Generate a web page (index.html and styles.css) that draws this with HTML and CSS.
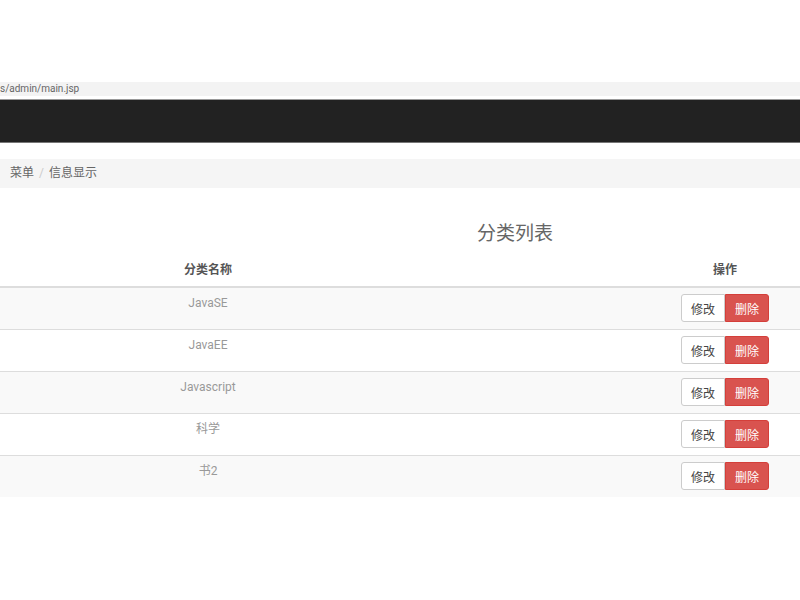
FILE: index.html
```html
<!DOCTYPE html>
<html lang="zh-CN">
<head>
    <meta charset="UTF-8">
    <title>分类列表</title>
    <link rel="stylesheet" href="styles.css">
</head>
<body>
    <div class="urlbar">s/admin/main.jsp</div>

    <!-- Navbar -->
    <div class="navbar"></div>

    <!-- Breadcrumb -->
    <div class="breadcrumb">
        <span>菜单</span>
        <span class="divider">/</span>
        <span>信息显示</span>
    </div>

    <h3 class="title">分类列表</h3>

    <table class="table">
        <colgroup>
            <col class="col-name">
            <col class="col-blank">
            <col class="col-ops">
        </colgroup>
        <thead>
            <tr>
                <th>分类名称</th>
                <th></th>
                <th>操作</th>
            </tr>
        </thead>
        <tbody>
            <tr>
                <td>JavaSE</td>
                <td></td>
                <td class="ops"><div class="btn-group"><button class="btn btn-default">修改</button><button class="btn btn-danger">删除</button></div></td>
            </tr>
            <tr>
                <td>JavaEE</td>
                <td></td>
                <td class="ops"><div class="btn-group"><button class="btn btn-default">修改</button><button class="btn btn-danger">删除</button></div></td>
            </tr>
            <tr>
                <td>Javascript</td>
                <td></td>
                <td class="ops"><div class="btn-group"><button class="btn btn-default">修改</button><button class="btn btn-danger">删除</button></div></td>
            </tr>
            <tr>
                <td>科学</td>
                <td></td>
                <td class="ops"><div class="btn-group"><button class="btn btn-default">修改</button><button class="btn btn-danger">删除</button></div></td>
            </tr>
            <tr>
                <td>书2</td>
                <td></td>
                <td class="ops"><div class="btn-group"><button class="btn btn-default">修改</button><button class="btn btn-danger">删除</button></div></td>
            </tr>
        </tbody>
    </table>
</body>
</html>
```

FILE: styles.css
```css
/* General */
body {
    margin: 0;
    padding-top: 82px;
    background-color: #fff;
    font-family: Roboto, "Noto Sans CJK SC", sans-serif;
    font-size: 12px;
    color: #555;
}

.urlbar {
    height: 14px;
    line-height: 14px;
    font-size: 10px;
    color: #666;
    background-color: #f3f3f3;
}

.navbar {
    margin-top: 3px;
    height: 42px;
    background-color: #222;
    border-top: 1px solid #999;
    border-bottom: 1px solid #777;
}

/* Breadcrumb */
.breadcrumb {
    margin-top: 16px;
    height: 29px;
    line-height: 29px;
    padding-left: 10px;
    background-color: #f5f5f5;
    font-size: 12px;
    color: #666;
}

.breadcrumb .divider {
    color: #ccc;
    padding: 0 2px;
}

.title {
    margin: 34px 0 0;
    padding-left: 230px;
    text-align: center;
    font-size: 19px;
    font-weight: normal;
    line-height: 24px;
    color: #666;
}

/* Table */
.table {
    width: 800px;
    margin-top: 9px;
    border-collapse: collapse;
    table-layout: fixed;
}

.col-name {
    width: 416px;
}

.col-blank {
    width: 234px;
}

.col-ops {
    width: 150px;
}

.table th {
    padding: 8px;
    line-height: 15px;
    font-size: 12px;
    font-weight: bold;
    color: #555;
    text-align: center;
    border-bottom: 2px solid #ddd;
}

.table td {
    padding: 8px;
    line-height: 15px;
    vertical-align: top;
    text-align: center;
    color: #999;
    border-top: 1px solid #ddd;
}

.table tbody tr:nth-child(odd) {
    background-color: #f9f9f9;
}

.table td.ops {
    padding: 6px 8px 7px;
}

/* Buttons */
.btn-group {
    display: flex;
    justify-content: center;
}

.btn {
    height: 28px;
    padding: 0 9px;
    font-family: Roboto, "Noto Sans CJK SC", sans-serif;
    font-size: 12px;
    cursor: pointer;
    border: 1px solid #ccc;
}

.btn-default {
    background-color: #fff;
    color: #444;
    border-radius: 3px 0 0 3px;
}

.btn-danger {
    background-color: #d9534f;
    border-color: #d43f3a;
    color: #fff;
    border-radius: 0 3px 3px 0;
}
```
